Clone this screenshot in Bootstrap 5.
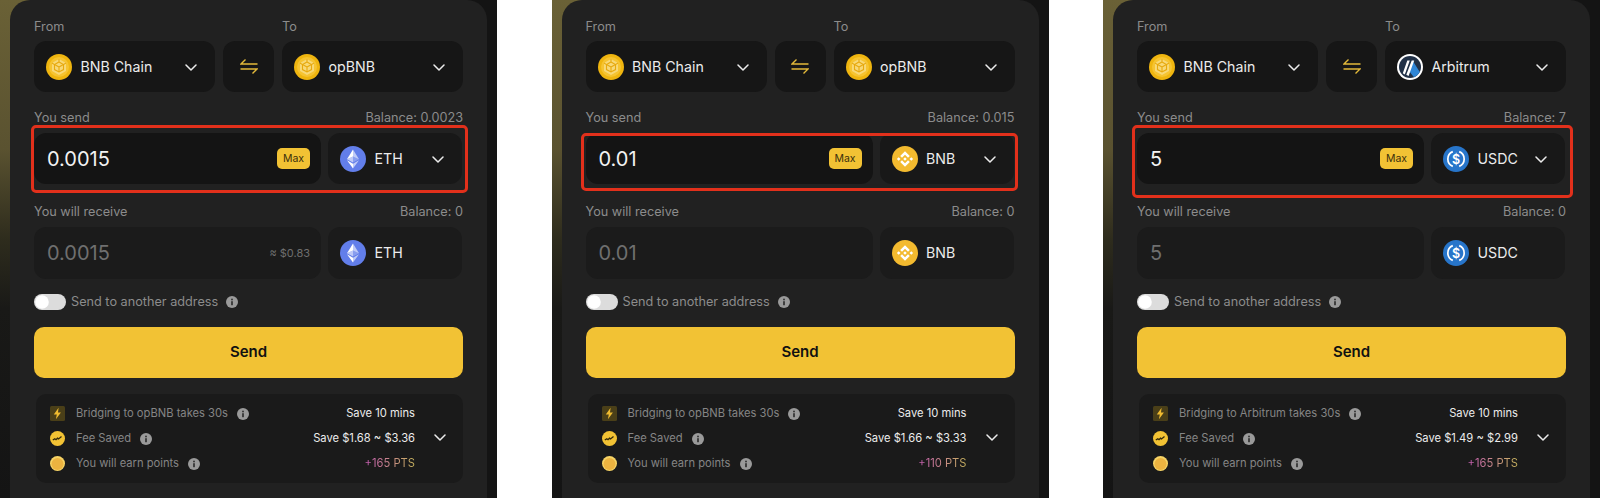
<!DOCTYPE html>
<html lang="en">
<head>
    <meta charset="UTF-8">
    <meta name="viewport" content="width=device-width, initial-scale=1.0">
    <title>opBNB Bridge</title>
    <link href="https://cdn.jsdelivr.net/npm/bootstrap@5.3.0/dist/css/bootstrap.min.css" rel="stylesheet">
    <style>
        body {
            background-color: #fff;
            font-family: Inter, "Liberation Sans", sans-serif;
            overflow: hidden;
        }
        .shots {
            height: 498px;
        }
        /* one screenshot strip, the gold glow only shows on the left edge */
        .strip {
            width: 497px;
            height: 498px;
            overflow: hidden;
            padding-left: 10px;
            padding-right: 10px;
            background: linear-gradient(180deg, #6a6136 0%, #5a5230 30%, #2e2c1d 48%, #191917 62%, #141414 100%) left top / 30px 100% no-repeat #141414;
        }
        .bridge-card {
            height: 498px;
            padding: 18px 24px 0 24px;
            background-color: #212121;
            border-radius: 20px 20px 0 0;
        }
        .field-label {
            font-size: 12.7px;
            line-height: 18px;
            color: #8c8c8c;
            margin-bottom: 6px;
        }
        .from-label {
            width: 248px;
        }
        .chain-row {
            margin-top: -1px;
        }
        .dark-box {
            background-color: #161616;
            border-radius: 12px;
            color: #ececec;
            font-size: 14.2px;
        }
        .chain-box {
            height: 51px;
            padding: 0 18px 0 12px;
        }
        .chain-from {
            width: 181px;
        }
        .chain-to {
            width: 181px;
        }
        .swap-box {
            width: 51px;
            height: 51px;
        }
        .token-icon {
            width: 26px;
            height: 26px;
            margin-right: 8.5px;
            flex-shrink: 0;
        }
        .chevron {
            width: 12px;
            height: 8px;
            margin-left: auto;
            margin-top: 3px;
            flex-shrink: 0;
        }
        .send-group {
            margin-top: 17px;
        }
        .amount-box {
            width: 287px;
            height: 51px;
            padding: 0 11px 0 13px;
            background-color: #141414;
        }
        .token-box {
            width: 134px;
            height: 51px;
            padding: 0 18px 0 12px;
            background-color: #181818;
        }
        .amount-row {
            gap: 7px;
        }
        .amount {
            font-size: 20px;
            color: #f2f2f2;
        }
        .amount-muted {
            color: #6f6f6f;
        }
        .max-tag {
            width: 33px;
            height: 21px;
            line-height: 21px;
            text-align: center;
            font-size: 10.5px;
            color: #3a2f0c;
            background-color: #f2c234;
            border-radius: 5px;
        }
        .usd-hint {
            font-size: 11px;
            color: #6f6f6f;
        }
        .red-frame {
            position: absolute;
            border: 3px solid #e2301b;
            border-radius: 5px;
            pointer-events: none;
        }
        .frame-a {
            left: -3px;
            right: -5px;
            top: -8px;
            bottom: -9px;
        }
        .frame-b {
            left: -5px;
            right: -3px;
            top: 0;
            bottom: -7px;
        }
        .frame-c {
            left: -5px;
            right: -7px;
            top: -8px;
            bottom: -14px;
        }
        .receive-group {
            margin-top: 19px;
        }
        .receive-group .dark-box {
            height: 52px;
            background-color: #1b1b1b;
        }
        .switch-row {
            margin-top: 15px;
            height: 16px;
            font-size: 12.7px;
            color: #8c8c8c;
        }
        .switch-row .form-check {
            min-height: 0;
            margin: 0 5px 0 0;
            padding: 0;
            display: flex;
        }
        .switch-row .form-check-input {
            width: 32px;
            height: 16px;
            margin: 0;
            border: 0;
            background-color: #dcdcdc;
            background-image: url("data:image/svg+xml,%3csvg xmlns='http://www.w3.org/2000/svg' viewBox='-4 -4 8 8'%3e%3ccircle r='3.4' fill='%23fff'/%3e%3c/svg%3e");
        }
        .info-dot {
            width: 12px;
            height: 12px;
            flex-shrink: 0;
        }
        .send-btn {
            height: 51px;
            margin-top: 17px;
            background-color: #f2c234;
            border: 0;
            border-radius: 10px;
            color: #111;
            font-size: 15px;
        }
        .send-btn:hover {
            background-color: #f2c234;
            color: #111;
        }
        .summary {
            height: 89px;
            margin: 16px 0 0 2px;
            padding: 7px 17px 0 14px;
            background-color: #1a1a1a;
            border-radius: 10px;
            position: relative;
        }
        .summary-row {
            height: 25px;
            font-size: 11.2px;
            color: #858585;
            white-space: nowrap;
        }
        .summary-icon {
            width: 15px;
            height: 15px;
            margin-right: 11px;
            flex-shrink: 0;
        }
        .summary-row .info-dot {
            margin-left: 9px;
        }
        .summary-val {
            margin-left: auto;
            margin-right: 31px;
            text-align: right;
            color: #ececec;
        }
        .pts-text {
            background: linear-gradient(90deg, #c75cb4, #c6b35c);
            -webkit-background-clip: text;
            background-clip: text;
            color: transparent;
        }
        .summary-chevron {
            position: absolute;
            right: 17px;
            top: 37px;
        }
    </style>
</head>
<body>
    <!-- shared icons -->
    <svg width="0" height="0" class="position-absolute">
        <defs>
            <symbol id="chev" viewBox="0 0 12 8">
                <path d="M1 1l5 5 5-5" fill="none" stroke="#ececec" stroke-width="1.5" stroke-linecap="round" stroke-linejoin="round"/>
            </symbol>
            <symbol id="swap" viewBox="0 0 18 15">
                <path d="M17.5 5H1l4.5-4.5" fill="none" stroke="#e3b93a" stroke-width="1.4"/>
                <path d="M.5 10H17l-4.5 4.5" fill="none" stroke="#e3b93a" stroke-width="1.4"/>
            </symbol>
            <symbol id="cube" viewBox="0 0 26 26">
                <circle cx="13" cy="13" r="13" fill="#efb50f"/>
                <circle cx="13" cy="13" r="10" fill="#f6c431"/>
                <path d="M13 5l7 4v8l-7 4-7-4V9z" fill="#f8d977"/>
                <path d="M13 8l4.500 2.600v5L13 18l-4.500-2.400v-5zM13 13v5M13 13l4.500-2.400M13 13l-4.500-2.400M6 9l2.500 1.600M20 9l-2.500 1.600M13 5v3" fill="none" stroke="#e7a90e" stroke-width="1.100"/>
            </symbol>
            <symbol id="bnb" viewBox="0 0 26 26">
                <circle cx="13" cy="13" r="13" fill="#f3ba2f"/>
                <path fill="#fff" d="M13 5.200l4.800 4.800-1.800 1.800-3-3-3 3-1.800-1.800zM13 20.800l4.800-4.800-1.800-1.800-3 3-3-3-1.800 1.800zM6.700 11.200L8.500 13l-1.800 1.800L4.900 13zM19.300 11.200l1.800 1.800-1.800 1.800-1.800-1.800zM13 11.200l1.800 1.800-1.800 1.800-1.800-1.800z"/>
            </symbol>
            <symbol id="eth" viewBox="0 0 26 26">
                <circle cx="13" cy="13" r="13" fill="#627eea"/>
                <path fill="#fff" fill-opacity=".6" d="M13 3.500V10.600l6 2.600z"/>
                <path fill="#fff" d="M13 3.500L7 13.200l6-2.600z"/>
                <path fill="#fff" fill-opacity=".6" d="M13 17.700v4.800l6-8.300z"/>
                <path fill="#fff" d="M13 22.500v-4.800l-6-3.500z"/>
                <path fill="#fff" fill-opacity=".25" d="M13 16.600l6-3.400-6-2.600z"/>
                <path fill="#fff" fill-opacity=".6" d="M7 13.200l6 3.400v-6z"/>
            </symbol>
            <symbol id="usdc" viewBox="0 0 26 26">
                <circle cx="13" cy="13" r="13" fill="#2775ca"/>
                <path d="M9.800 5.600a8 8 0 0 0 0 14.800M16.200 5.600a8 8 0 0 1 0 14.800" fill="none" stroke="#fff" stroke-width="1.700"/>
                <text x="13" y="17.500" text-anchor="middle" font-family="Inter, sans-serif" font-size="12.500" font-weight="600" fill="#fff">$</text>
            </symbol>
            <symbol id="arb" viewBox="0 0 26 26">
                <circle cx="13" cy="13" r="13" fill="#fff"/>
                <circle cx="13" cy="13" r="11" fill="#213147"/>
                <path fill="#2f86d6" d="M15.500 6.500l7.300 11.500a11 11 0 0 1-5.800 5.200l-5.400-6.700z"/>
                <path fill="#fff" d="M10.300 6.500h2.500L7.800 20.500l-2-1.300zM14.700 6.500h2.500l-5.600 15.400-2.300-1.200z"/>
            </symbol>
            <symbol id="info" viewBox="0 0 12 12">
                <circle cx="6" cy="6" r="6" fill="#9a9a9a"/>
                <rect x="5.200" y="5.200" width="1.600" height="4" fill="#2a2a2a"/>
                <rect x="5.200" y="2.700" width="1.600" height="1.600" fill="#2a2a2a"/>
            </symbol>
            <symbol id="bolt" viewBox="0 0 15 15">
                <rect width="15" height="15" rx="1.500" fill="#4a3f18"/>
                <path fill="#efbb30" d="M8.600 1.800L3.800 8.400h3L5.900 13.200l5-6.800H8z"/>
            </symbol>
            <symbol id="fee" viewBox="0 0 15 15">
                <circle cx="7.500" cy="7.500" r="7.500" fill="#f2c234"/>
                <path d="M2.800 9l2-1.300 1.200 1 1.500-1.500 1 .7 3-2.400" fill="none" stroke="#332a0c" stroke-width="1.300"/>
            </symbol>
            <symbol id="pts" viewBox="0 0 15 15">
                <circle cx="7.500" cy="7.500" r="7.500" fill="#f7d465"/>
                <circle cx="7.500" cy="7.900" r="6" fill="#ecb340"/>
            </symbol>
        </defs>
    </svg>

    <div class="shots d-flex justify-content-between">

        <!-- first shot: ETH -->
        <section class="strip">
            <div class="bridge-card d-flex flex-column">
                <div class="field-label d-flex"><span class="from-label">From</span><span>To</span></div>
                <div class="chain-row d-flex justify-content-between">
                    <div class="dark-box chain-box chain-from d-flex align-items-center">
                        <svg class="token-icon"><use href="#cube"/></svg>BNB Chain
                        <svg class="chevron"><use href="#chev"/></svg>
                    </div>
                    <div class="dark-box swap-box d-flex align-items-center justify-content-center">
                        <svg width="18" height="15"><use href="#swap"/></svg>
                    </div>
                    <div class="dark-box chain-box chain-to d-flex align-items-center">
                        <svg class="token-icon"><use href="#cube"/></svg>opBNB
                        <svg class="chevron"><use href="#chev"/></svg>
                    </div>
                </div>
                <div class="send-group">
                    <div class="field-label d-flex justify-content-between"><span>You send</span><span>Balance: 0.0023</span></div>
                    <div class="amount-row d-flex position-relative">
                        <div class="dark-box amount-box d-flex align-items-center justify-content-between">
                            <span class="amount">0.0015</span><span class="max-tag">Max</span>
                        </div>
                        <div class="dark-box token-box d-flex align-items-center">
                            <svg class="token-icon"><use href="#eth"/></svg>ETH
                            <svg class="chevron"><use href="#chev"/></svg>
                        </div>
                        <div class="red-frame frame-a"></div>
                    </div>
                </div>
                <div class="receive-group">
                    <div class="field-label d-flex justify-content-between"><span>You will receive</span><span>Balance: 0</span></div>
                    <div class="amount-row d-flex">
                        <div class="dark-box amount-box d-flex align-items-center justify-content-between">
                            <span class="amount amount-muted">0.0015</span><span class="usd-hint">≈ $0.83</span>
                        </div>
                        <div class="dark-box token-box d-flex align-items-center">
                            <svg class="token-icon"><use href="#eth"/></svg>ETH
                        </div>
                    </div>
                </div>
                <div class="switch-row d-flex align-items-center">
                    <div class="form-check form-switch"><input class="form-check-input" type="checkbox" role="switch" aria-label="Send to another address"></div>
                    <span>Send to another address</span>
                    <svg class="info-dot ms-2"><use href="#info"/></svg>
                </div>
                <button class="btn send-btn w-100 fw-semibold" type="button">Send</button>
                <div class="summary">
                    <div class="summary-row d-flex align-items-center">
                        <svg class="summary-icon"><use href="#bolt"/></svg><span>Bridging to opBNB takes 30s</span><svg class="info-dot"><use href="#info"/></svg>
                        <span class="summary-val">Save 10 mins</span>
                    </div>
                    <div class="summary-row d-flex align-items-center">
                        <svg class="summary-icon"><use href="#fee"/></svg><span>Fee Saved</span><svg class="info-dot"><use href="#info"/></svg>
                        <span class="summary-val">Save $1.68 ~ $3.36</span>
                    </div>
                    <div class="summary-row d-flex align-items-center">
                        <svg class="summary-icon"><use href="#pts"/></svg><span>You will earn points</span><svg class="info-dot"><use href="#info"/></svg>
                        <span class="summary-val"><span class="pts-text">+165 PTS</span></span>
                    </div>
                    <svg class="chevron summary-chevron"><use href="#chev"/></svg>
                </div>
            </div>
        </section>

        <!-- second shot: BNB -->
        <section class="strip">
            <div class="bridge-card d-flex flex-column">
                <div class="field-label d-flex"><span class="from-label">From</span><span>To</span></div>
                <div class="chain-row d-flex justify-content-between">
                    <div class="dark-box chain-box chain-from d-flex align-items-center">
                        <svg class="token-icon"><use href="#cube"/></svg>BNB Chain
                        <svg class="chevron"><use href="#chev"/></svg>
                    </div>
                    <div class="dark-box swap-box d-flex align-items-center justify-content-center">
                        <svg width="18" height="15"><use href="#swap"/></svg>
                    </div>
                    <div class="dark-box chain-box chain-to d-flex align-items-center">
                        <svg class="token-icon"><use href="#cube"/></svg>opBNB
                        <svg class="chevron"><use href="#chev"/></svg>
                    </div>
                </div>
                <div class="send-group">
                    <div class="field-label d-flex justify-content-between"><span>You send</span><span>Balance: 0.015</span></div>
                    <div class="amount-row d-flex position-relative">
                        <div class="dark-box amount-box d-flex align-items-center justify-content-between">
                            <span class="amount">0.01</span><span class="max-tag">Max</span>
                        </div>
                        <div class="dark-box token-box d-flex align-items-center">
                            <svg class="token-icon"><use href="#bnb"/></svg>BNB
                            <svg class="chevron"><use href="#chev"/></svg>
                        </div>
                        <div class="red-frame frame-b"></div>
                    </div>
                </div>
                <div class="receive-group">
                    <div class="field-label d-flex justify-content-between"><span>You will receive</span><span>Balance: 0</span></div>
                    <div class="amount-row d-flex">
                        <div class="dark-box amount-box d-flex align-items-center">
                            <span class="amount amount-muted">0.01</span>
                        </div>
                        <div class="dark-box token-box d-flex align-items-center">
                            <svg class="token-icon"><use href="#bnb"/></svg>BNB
                        </div>
                    </div>
                </div>
                <div class="switch-row d-flex align-items-center">
                    <div class="form-check form-switch"><input class="form-check-input" type="checkbox" role="switch" aria-label="Send to another address"></div>
                    <span>Send to another address</span>
                    <svg class="info-dot ms-2"><use href="#info"/></svg>
                </div>
                <button class="btn send-btn w-100 fw-semibold" type="button">Send</button>
                <div class="summary">
                    <div class="summary-row d-flex align-items-center">
                        <svg class="summary-icon"><use href="#bolt"/></svg><span>Bridging to opBNB takes 30s</span><svg class="info-dot"><use href="#info"/></svg>
                        <span class="summary-val">Save 10 mins</span>
                    </div>
                    <div class="summary-row d-flex align-items-center">
                        <svg class="summary-icon"><use href="#fee"/></svg><span>Fee Saved</span><svg class="info-dot"><use href="#info"/></svg>
                        <span class="summary-val">Save $1.66 ~ $3.33</span>
                    </div>
                    <div class="summary-row d-flex align-items-center">
                        <svg class="summary-icon"><use href="#pts"/></svg><span>You will earn points</span><svg class="info-dot"><use href="#info"/></svg>
                        <span class="summary-val"><span class="pts-text">+110 PTS</span></span>
                    </div>
                    <svg class="chevron summary-chevron"><use href="#chev"/></svg>
                </div>
            </div>
        </section>

        <!-- third shot: USDC to Arbitrum -->
        <section class="strip">
            <div class="bridge-card d-flex flex-column">
                <div class="field-label d-flex"><span class="from-label">From</span><span>To</span></div>
                <div class="chain-row d-flex justify-content-between">
                    <div class="dark-box chain-box chain-from d-flex align-items-center">
                        <svg class="token-icon"><use href="#cube"/></svg>BNB Chain
                        <svg class="chevron"><use href="#chev"/></svg>
                    </div>
                    <div class="dark-box swap-box d-flex align-items-center justify-content-center">
                        <svg width="18" height="15"><use href="#swap"/></svg>
                    </div>
                    <div class="dark-box chain-box chain-to d-flex align-items-center">
                        <svg class="token-icon"><use href="#arb"/></svg>Arbitrum
                        <svg class="chevron"><use href="#chev"/></svg>
                    </div>
                </div>
                <div class="send-group">
                    <div class="field-label d-flex justify-content-between"><span>You send</span><span>Balance: 7</span></div>
                    <div class="amount-row d-flex position-relative">
                        <div class="dark-box amount-box d-flex align-items-center justify-content-between">
                            <span class="amount">5</span><span class="max-tag">Max</span>
                        </div>
                        <div class="dark-box token-box d-flex align-items-center">
                            <svg class="token-icon"><use href="#usdc"/></svg>USDC
                            <svg class="chevron"><use href="#chev"/></svg>
                        </div>
                        <div class="red-frame frame-c"></div>
                    </div>
                </div>
                <div class="receive-group">
                    <div class="field-label d-flex justify-content-between"><span>You will receive</span><span>Balance: 0</span></div>
                    <div class="amount-row d-flex">
                        <div class="dark-box amount-box d-flex align-items-center">
                            <span class="amount amount-muted">5</span>
                        </div>
                        <div class="dark-box token-box d-flex align-items-center">
                            <svg class="token-icon"><use href="#usdc"/></svg>USDC
                        </div>
                    </div>
                </div>
                <div class="switch-row d-flex align-items-center">
                    <div class="form-check form-switch"><input class="form-check-input" type="checkbox" role="switch" aria-label="Send to another address"></div>
                    <span>Send to another address</span>
                    <svg class="info-dot ms-2"><use href="#info"/></svg>
                </div>
                <button class="btn send-btn w-100 fw-semibold" type="button">Send</button>
                <div class="summary">
                    <div class="summary-row d-flex align-items-center">
                        <svg class="summary-icon"><use href="#bolt"/></svg><span>Bridging to Arbitrum takes 30s</span><svg class="info-dot"><use href="#info"/></svg>
                        <span class="summary-val">Save 10 mins</span>
                    </div>
                    <div class="summary-row d-flex align-items-center">
                        <svg class="summary-icon"><use href="#fee"/></svg><span>Fee Saved</span><svg class="info-dot"><use href="#info"/></svg>
                        <span class="summary-val">Save $1.49 ~ $2.99</span>
                    </div>
                    <div class="summary-row d-flex align-items-center">
                        <svg class="summary-icon"><use href="#pts"/></svg><span>You will earn points</span><svg class="info-dot"><use href="#info"/></svg>
                        <span class="summary-val"><span class="pts-text">+165 PTS</span></span>
                    </div>
                    <svg class="chevron summary-chevron"><use href="#chev"/></svg>
                </div>
            </div>
        </section>

    </div>
    <script src="https://cdn.jsdelivr.net/npm/bootstrap@5.3.0/dist/js/bootstrap.bundle.min.js"></script>
</body>
</html>
